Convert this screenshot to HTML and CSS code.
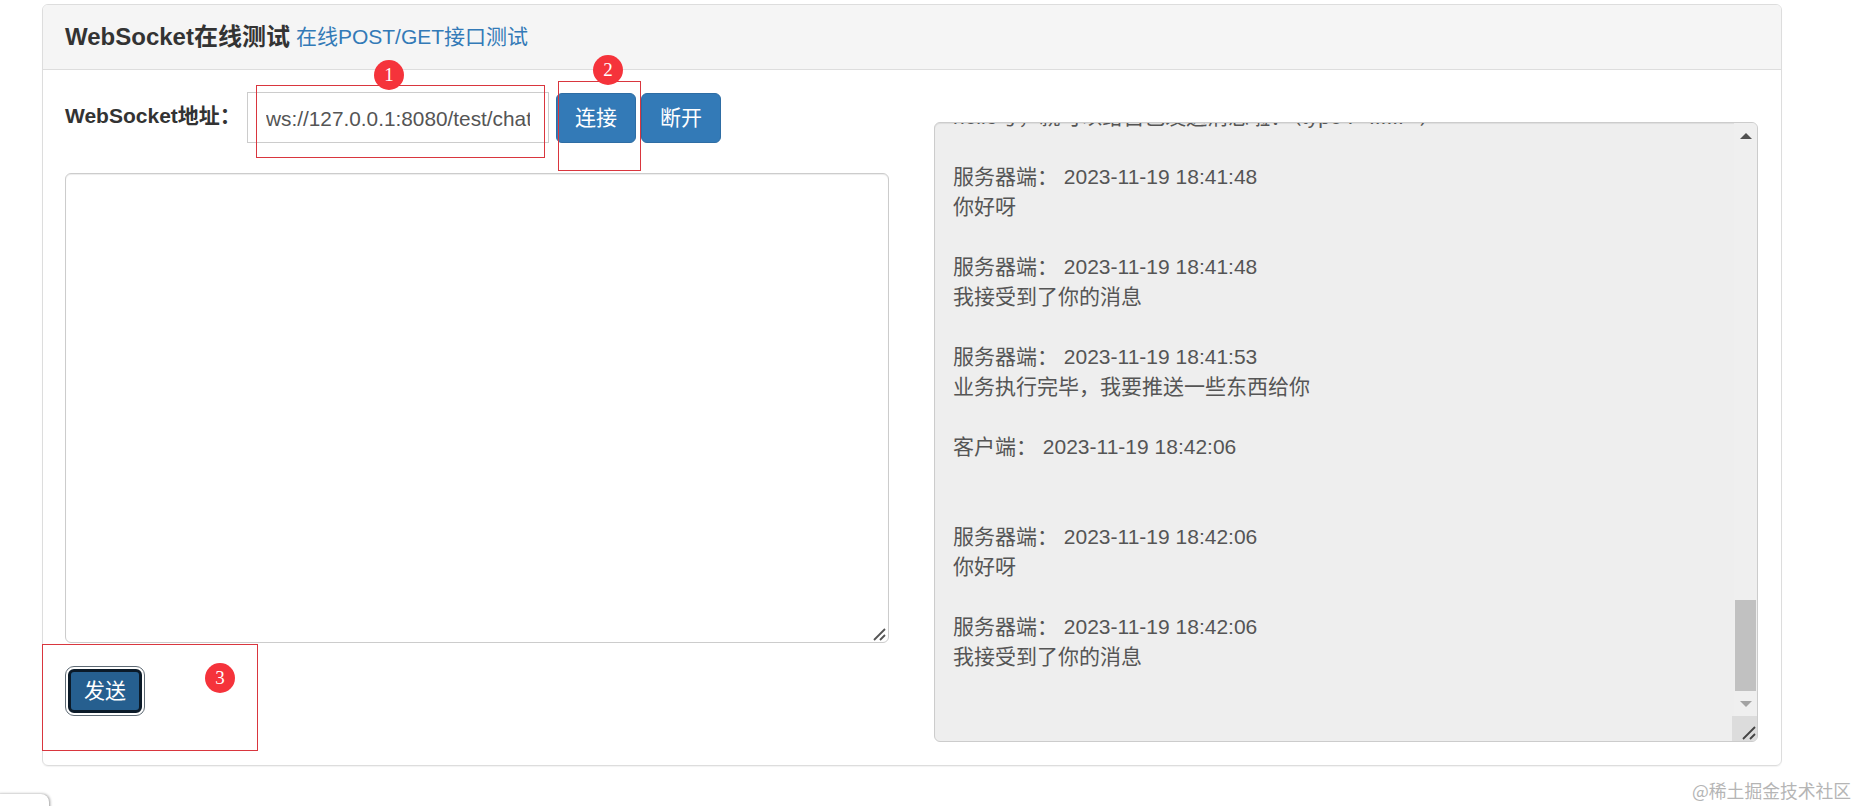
FILE: index.html
```html
<!DOCTYPE html>
<html lang="zh-CN">
<head>
<meta charset="utf-8">
<title>WebSocket在线测试</title>
<link rel="stylesheet" href="styles.css">
</head>
<body>
<main class="page">
  <section class="panel">
    <header class="panel-heading">
      <h1 class="panel-title">WebSocket在线测试</h1>
      <a class="panel-link" href="#">在线POST/GET接口测试</a>
    </header>
    <div class="panel-body">
      <div class="col">
        <div class="addr-row">
          <label class="addr-label" for="addr">WebSocket地址：</label>
          <input class="addr-input" id="addr" type="text" value="ws://127.0.0.1:8080/test/chat">
          <button class="btn btn-connect" type="button">连接</button>
          <button class="btn btn-close" type="button">断开</button>
        </div>
        <div class="msg-wrap">
          <textarea class="msg-input"></textarea>
          <svg class="msg-grip" width="13" height="13" viewBox="0 0 13 13"><path d="M1 12 12 1M7 12l5-5" stroke="#555" stroke-width="1.8" fill="none"/></svg>
        </div>
        <button class="btn btn-send" type="button">发送</button>
      </div>
      <div class="col col-log">
        <div class="log">
          <div class="log-text">hello号，就可以给自己发送消息啦：（type : ' ...... ' ）

服务器端： 2023-11-19 18:41:48
你好呀

服务器端： 2023-11-19 18:41:48
我接受到了你的消息

服务器端： 2023-11-19 18:41:53
业务执行完毕，我要推送一些东西给你

客户端： 2023-11-19 18:42:06


服务器端： 2023-11-19 18:42:06
你好呀

服务器端： 2023-11-19 18:42:06
我接受到了你的消息</div>
          <div class="scrollbar">
            <span class="arrow arrow-up"></span>
            <span class="thumb"></span>
            <span class="arrow arrow-down"></span>
          </div>
          <div class="resizer">
            <svg width="25" height="25" viewBox="0 0 25 25"><path d="M11 23 23 11M18 23l5-5" stroke="#444" stroke-width="1.8" fill="none"/></svg>
          </div>
        </div>
      </div>
    </div>
  </section>
</main>
<div class="mark mark-1"></div>
<div class="mark mark-2"></div>
<div class="mark mark-3"></div>
<div class="badge badge-1">1</div>
<div class="badge badge-2">2</div>
<div class="badge badge-3">3</div>
<div class="corner-tab"></div>
<div class="watermark">@稀土掘金技术社区</div>
</body>
</html>
```
FILE: styles.css
```css
* { box-sizing: border-box; }
html, body { margin: 0; height: 100%; overflow: hidden; background: #fff; }
body {
  position: relative;
  font-family: "Liberation Sans", "Noto Sans CJK SC", sans-serif;
  font-size: 21px;
  line-height: 30px;
  color: #333;
}
.page { padding: 4px 76px 0 42px; }
.panel {
  border: 1px solid #ddd;
  border-radius: 6px;
  height: 762px;
  box-shadow: 0 1px 1px rgba(0,0,0,.05);
}
.panel-heading {
  height: 65px;
  padding: 0 22px;
  display: flex;
  align-items: center;
  gap: 6px;
  background: #f5f5f5;
  border-bottom: 1px solid #ddd;
  border-radius: 5px 5px 0 0;
}
.panel-title { margin: 0; font-size: 24px; font-weight: 700; color: #333; }
.panel-link { color: #337ab7; text-decoration: none; }
.panel-body {
  display: flex;
  gap: 45px;
  padding: 22px 22px 0;
}
.col { width: 824px; flex: none; }
.col-log { padding-top: 30px; }
.addr-row { display: flex; align-items: flex-start; height: 51px; }
.addr-label { width: 182px; flex: none; font-weight: 700; padding-top: 9px; }
.addr-input {
  width: 302px;
  height: 51px;
  flex: none;
  padding: 2px 18px 0;
  border: 1px solid #ccc;
  border-radius: 0;
  outline: none;
  font: inherit;
  font-size: 20.8px;
  color: #555;
  background: #fff;
}
.btn {
  width: 80px;
  height: 50px;
  padding: 0;
  border: 1px solid #2e6da4;
  border-radius: 6px;
  background: #337ab7;
  color: #fff;
  font: inherit;
  flex: none;
}
.btn-connect { margin: 1px 0 0 7px; }
.btn-close { margin: 1px 0 0 5px; }
.msg-wrap { position: relative; height: 470px; margin: 30px 0 26px; }
.msg-input {
  display: block;
  width: 824px;
  height: 470px;
  padding: 9px 18px;
  border: 1px solid #ccc;
  border-radius: 6px;
  outline: none;
  resize: none;
  font: inherit;
  color: #555;
  box-shadow: inset 0 1px 1px rgba(0,0,0,.075);
}
.msg-grip { position: absolute; right: 3px; bottom: 2px; }
.btn-send {
  display: block;
  width: 74px;
  height: 44px;
  margin: 0 3px;
  border: 3px solid #0b1a28;
  border-radius: 6px;
  background: #265f8f;
  outline: 1px solid #5f6b75;
  outline-offset: 2px;
  box-shadow: 0 0 0 2px #fff;
}
.log {
  position: relative;
  height: 620px;
  overflow: hidden;
  border: 1px solid #ccc;
  border-radius: 6px;
  background: #eee;
  color: #555;
  box-shadow: inset 0 1px 1px rgba(0,0,0,.075);
}
.log-text {
  white-space: pre-line;
  margin-top: -21px;
  padding-left: 18px;
}
.scrollbar {
  position: absolute;
  top: 0;
  right: 0;
  bottom: 25px;
  width: 23px;
  background: #efefef;
}
.arrow { position: absolute; left: 6px; width: 0; height: 0; border-left: 6px solid transparent; border-right: 6px solid transparent; }
.arrow-up { top: 10px; border-bottom: 6px solid #505050; }
.arrow-down { bottom: 9px; border-top: 6px solid #a3a3a3; }
.thumb { position: absolute; left: 1px; right: 1px; bottom: 25px; height: 91px; background: #c1c1c1; }
.resizer { position: absolute; right: 0; bottom: 0; width: 25px; height: 25px; background: #dcdcdc; }
.resizer svg { display: block; }
.mark { position: absolute; border: 1px solid #d9363e; pointer-events: none; }
.mark-1 { left: 256px; top: 85px; width: 289px; height: 73px; }
.mark-2 { left: 558px; top: 81px; width: 83px; height: 90px; }
.mark-3 { left: 42px; top: 644px; width: 216px; height: 107px; }
.badge {
  position: absolute;
  width: 30px;
  height: 30px;
  border-radius: 50%;
  background: #f5333b;
  color: #fff;
  font-family: "Liberation Serif", serif;
  font-size: 19px;
  line-height: 30px;
  text-align: center;
}
.badge-1 { left: 374px; top: 60px; }
.badge-2 { left: 593px; top: 55px; }
.badge-3 { left: 205px; top: 663px; }
.corner-tab {
  position: absolute;
  left: -8px;
  top: 794px;
  width: 57px;
  height: 30px;
  background: #fff;
  border-radius: 8px;
  box-shadow: 1px 0 3px rgba(0,0,0,.4);
}
.watermark {
  position: absolute;
  left: 1692px;
  top: 778px;
  font-family: "Noto Sans CJK SC", sans-serif;
  font-size: 17.8px;
  line-height: 24px;
  color: #b5b5b5;
  white-space: nowrap;
}
```
